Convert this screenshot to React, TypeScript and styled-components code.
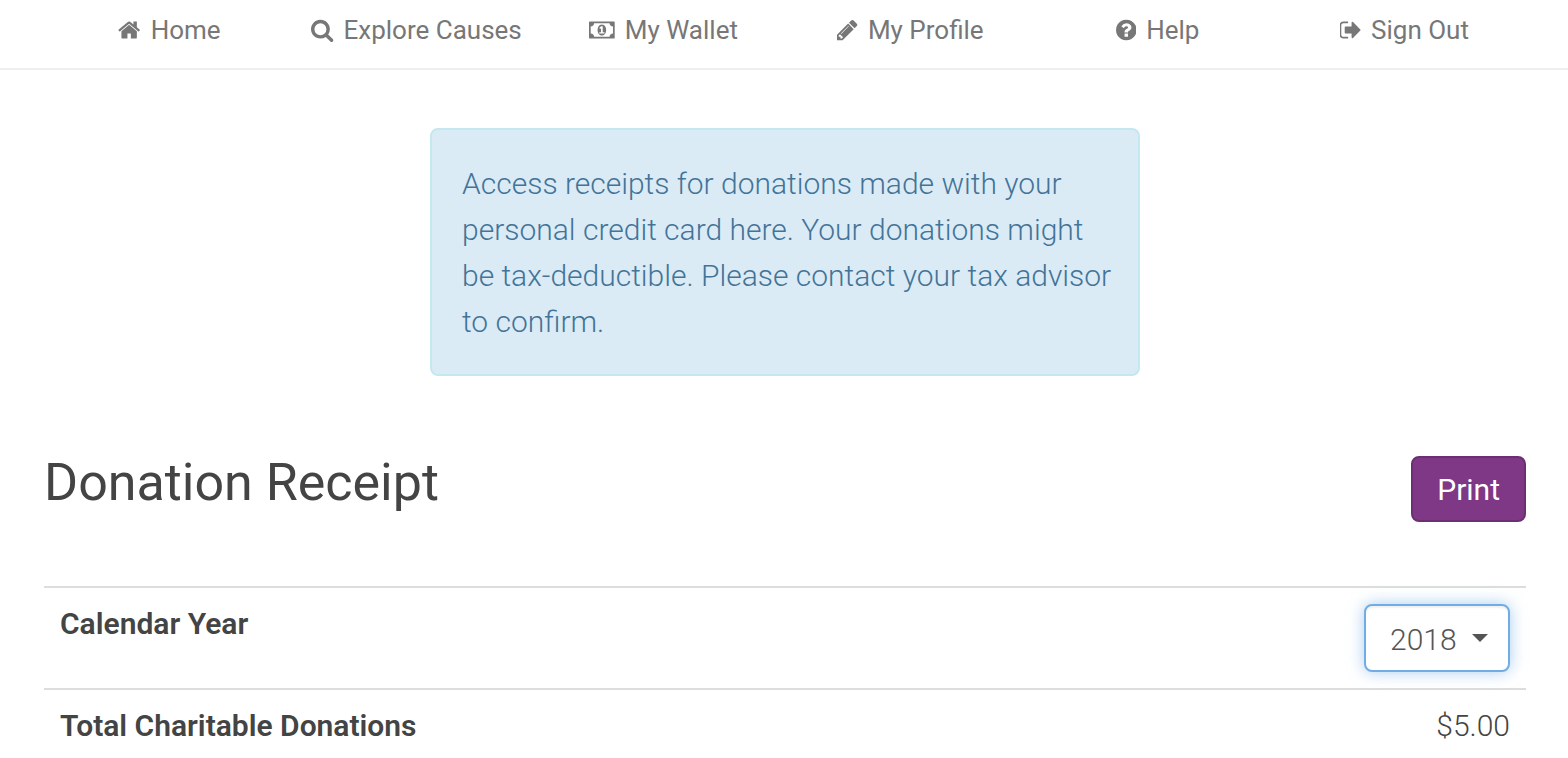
import React from 'react';
import styled, { createGlobalStyle } from 'styled-components';

const GlobalStyle = createGlobalStyle`
  *, *::before, *::after { box-sizing: border-box; }
  body {
    margin: 0;
    background: #fff;
    color: #444;
    font-family: Roboto, "Liberation Sans", sans-serif;
    font-size: 30px;
    font-weight: 300;
    line-height: 40px;
  }
`;

const NavBar = styled.nav`
  padding: 0 40px 0 46px;
  border-bottom: 2px solid #eee;
`;

const NavList = styled.ul`
  display: grid;
  grid-template-columns: repeat(6, 1fr);
  margin: 0;
  padding: 10px 0 18px;
  list-style: none;
`;

const NavItem = styled.li`
  display: flex;
  justify-content: center;
`;

const NavLink = styled.a`
  display: flex;
  align-items: center;
  gap: 10px;
  color: #777;
  font-size: 26px;
  font-weight: 400;
  text-decoration: none;
  white-space: nowrap;
`;

const NavIcon = styled.svg`
  height: 24px;
  flex: none;
  fill: currentColor;
`;

const Main = styled.main`
  padding: 58px 42px 0 44px;
`;

const Notice = styled.p`
  max-width: 710px;
  margin: 0 auto 80px;
  padding: 31px 24px 29px 30px;
  border: 2px solid #c4e8f0;
  border-radius: 8px;
  background: #dbebf6;
  color: #437498;
  line-height: 46px;
`;

const TitleRow = styled.header`
  display: flex;
  align-items: flex-start;
  justify-content: space-between;
  margin-bottom: 64px;
`;

const Title = styled.h1`
  margin: 0;
  font-size: 52px;
  font-weight: 400;
  line-height: 54px;
`;

const PrintButton = styled.button`
  padding: 12px 24px 10px;
  border: 2px solid #6b2f72;
  border-radius: 8px;
  background: #7e3886;
  color: #fff;
  font: inherit;
  font-weight: 400;
`;

const Summary = styled.table`
  width: 100%;
  border-collapse: separate;
  border-spacing: 0;
`;

const Label = styled.th`
  padding: 16px;
  border-top: 2px solid #ddd;
  font-weight: 600;
  text-align: left;
  vertical-align: top;
`;

const Value = styled.td`
  padding: 16px;
  border-top: 2px solid #ddd;
  text-align: right;
  vertical-align: top;
`;

const YearPicker = styled.span`
  display: inline-block;
  position: relative;
  vertical-align: top;
`;

const YearSelect = styled.select`
  display: block;
  appearance: none;
  width: 146px;
  height: 68px;
  padding: 4px 48px 0 24px;
  border: 2px solid #72ace4;
  border-radius: 8px;
  outline: none;
  background: #fff;
  box-shadow: inset 0 2px 2px rgba(0, 0, 0, 0.06), 0 0 16px rgba(114, 172, 228, 0.6);
  color: #555;
  font: inherit;
`;

const Caret = styled.svg`
  position: absolute;
  top: 30px;
  right: 22px;
  width: 16px;
  height: 8px;
  fill: #555;
  pointer-events: none;
`;

const navItems = [
  {
    label: 'Home',
    viewBox: '64 0 1664 1792',
    path: 'M1472 992v480q0 26-19 45t-45 19h-384v-384h-256v384h-384q-26 0-45-19t-19-45v-480q0-1 .5-3t.5-3l575-474 575 474q1 2 1 6zm223-69l-62 74q-8 9-21 11h-3q-13 0-21-7l-692-577-692 577q-12 8-24 7-13-2-21-11l-62-74q-8-10-7-23.5t11-21.5l719-599q32-26 76-26t76 26l244 204v-195q0-14 9-23t23-9h192q14 0 23 9t9 23v408l219 182q10 8 11 21.5t-7 23.5z',
  },
  {
    label: 'Explore Causes',
    viewBox: '64 0 1664 1792',
    path: 'M1216 832q0-185-131.500-316.500t-316.500-131.500-316.500 131.500-131.500 316.500 131.500 316.500 316.500 131.500 316.500-131.500 131.500-316.500zm512 832q0 52-38 90t-90 38q-54 0-90-38l-343-342q-179 124-399 124-143 0-273.500-55.500t-225-150-150-225-55.500-273.500 55.500-273.500 150-225 225-150 273.500-55.500 273.500 55.500 225 150 150 225 55.500 273.500q0 220-124 399l343 343q37 37 37 90z',
  },
  {
    label: 'My Wallet',
    viewBox: '0 0 1920 1792',
    path: 'M768 1152h384v-96h-128v-448h-114l-148 137 77 80q42-37 55-57h2v288h-128v96zm512-256q0 70-21 142t-59.500 134-101.500 101-138 39-138-39-101.500-101-59.500-134-21-142 21-142 59.500-134 101.500-101 138-39 138 39 101.500 101 59.500 134 21 142zm512 256v-512q-106 0-181-75t-75-181h-1152q0 106-75 181t-181 75v512q106 0 181 75t75 181h1152q0-106 75-181t181-75zm128-832v1152q0 26-19 45t-45 19h-1792q-26 0-45-19t-19-45v-1152q0-26 19-45t45-19h1792q26 0 45 19t19 45z',
  },
  {
    label: 'My Profile',
    viewBox: '128 0 1536 1792',
    path: 'M491 1536l91-91-235-235-91 91v107h128v128h107zm523-928q0-22-22-22-10 0-17 7l-542 542q-7 7-7 17 0 22 22 22 10 0 17-7l542-542q7-7 7-17zm-54-192l416 416-832 832h-416v-416zm683 96q0 53-37 90l-166 166-416-416 166-165q36-38 90-38 53 0 91 38l235 234q37 39 37 91z',
  },
  {
    label: 'Help',
    viewBox: '128 0 1536 1792',
    path: 'M1024 1376v-192q0-14-9-23t-23-9h-192q-14 0-23 9t-9 23v192q0 14 9 23t23 9h192q14 0 23-9t9-23zm256-672q0-88-55.500-163t-138.500-116-170-41q-243 0-371 213-15 24 8 42l132 100q7 6 19 6 16 0 25-12 53-68 86-92 34-24 86-24 48 0 85.500 26t37.500 59q0 38-20 61t-68 45q-63 28-115.500 86.500t-52.500 125.500v36q0 14 9 23t23 9h192q14 0 23-9t9-23q0-19 21.500-49.500t54.500-49.500q32-18 49-28.500t46-35 44.500-48 28-60.500 12.500-81zm384 192q0 209-103 385.500t-279.500 279.500-385.500 103-385.500-103-279.500-279.500-103-385.500 103-385.500 279.500-279.500 385.500-103 385.500 103 279.500 279.500 103 385.500z',
  },
  {
    label: 'Sign Out',
    viewBox: '96 0 1568 1792',
    path: 'M704 1440q0 4 1 20t.5 26.500-3 23.500-10 19.500-20.500 6.500h-320q-119 0-203.500-84.500t-84.500-203.500v-704q0-119 84.500-203.500t203.500-84.500h320q13 0 22.500 9.500t9.500 22.500q0 4 1 20t.5 26.500-3 23.500-10 19.500-20.500 6.500h-320q-66 0-113 47t-47 113v704q0 66 47 113t113 47h312l11.500 1 11.500 3 8 5.500 7 9 2 13.500zm928-544q0 26-19 45l-544 544q-19 19-45 19t-45-19-19-45v-288h-448q-26 0-45-19t-19-45v-384q0-26 19-45t45-19h448v-288q0-26 19-45t45-19 45 19l544 544q19 19 19 45z',
  },
];

export default function App() {
  return (
    <>
      <GlobalStyle />
      <NavBar>
        <NavList>
          {navItems.map(item => (
            <NavItem key={item.label}>
              <NavLink href="#">
                <NavIcon viewBox={item.viewBox} aria-hidden="true">
                  <path d={item.path} />
                </NavIcon>
                {item.label}
              </NavLink>
            </NavItem>
          ))}
        </NavList>
      </NavBar>
      <Main>
        <Notice>
          Access receipts for donations made with your personal credit card here. Your donations
          might be tax-deductible. Please contact your tax advisor to confirm.
        </Notice>
        <TitleRow>
          <Title>Donation Receipt</Title>
          <PrintButton type="button">Print</PrintButton>
        </TitleRow>
        <Summary>
          <tbody>
            <tr>
              <Label scope="row">
                <label htmlFor="year">Calendar Year</label>
              </Label>
              <Value>
                <YearPicker>
                  <YearSelect id="year" defaultValue="2018">
                    <option>2018</option>
                    <option>2017</option>
                  </YearSelect>
                  <Caret viewBox="0 0 16 8" aria-hidden="true">
                    <path d="M0 0h16L8 8z" />
                  </Caret>
                </YearPicker>
              </Value>
            </tr>
            <tr>
              <Label scope="row">Total Charitable Donations</Label>
              <Value>$5.00</Value>
            </tr>
          </tbody>
        </Summary>
      </Main>
    </>
  );
}
